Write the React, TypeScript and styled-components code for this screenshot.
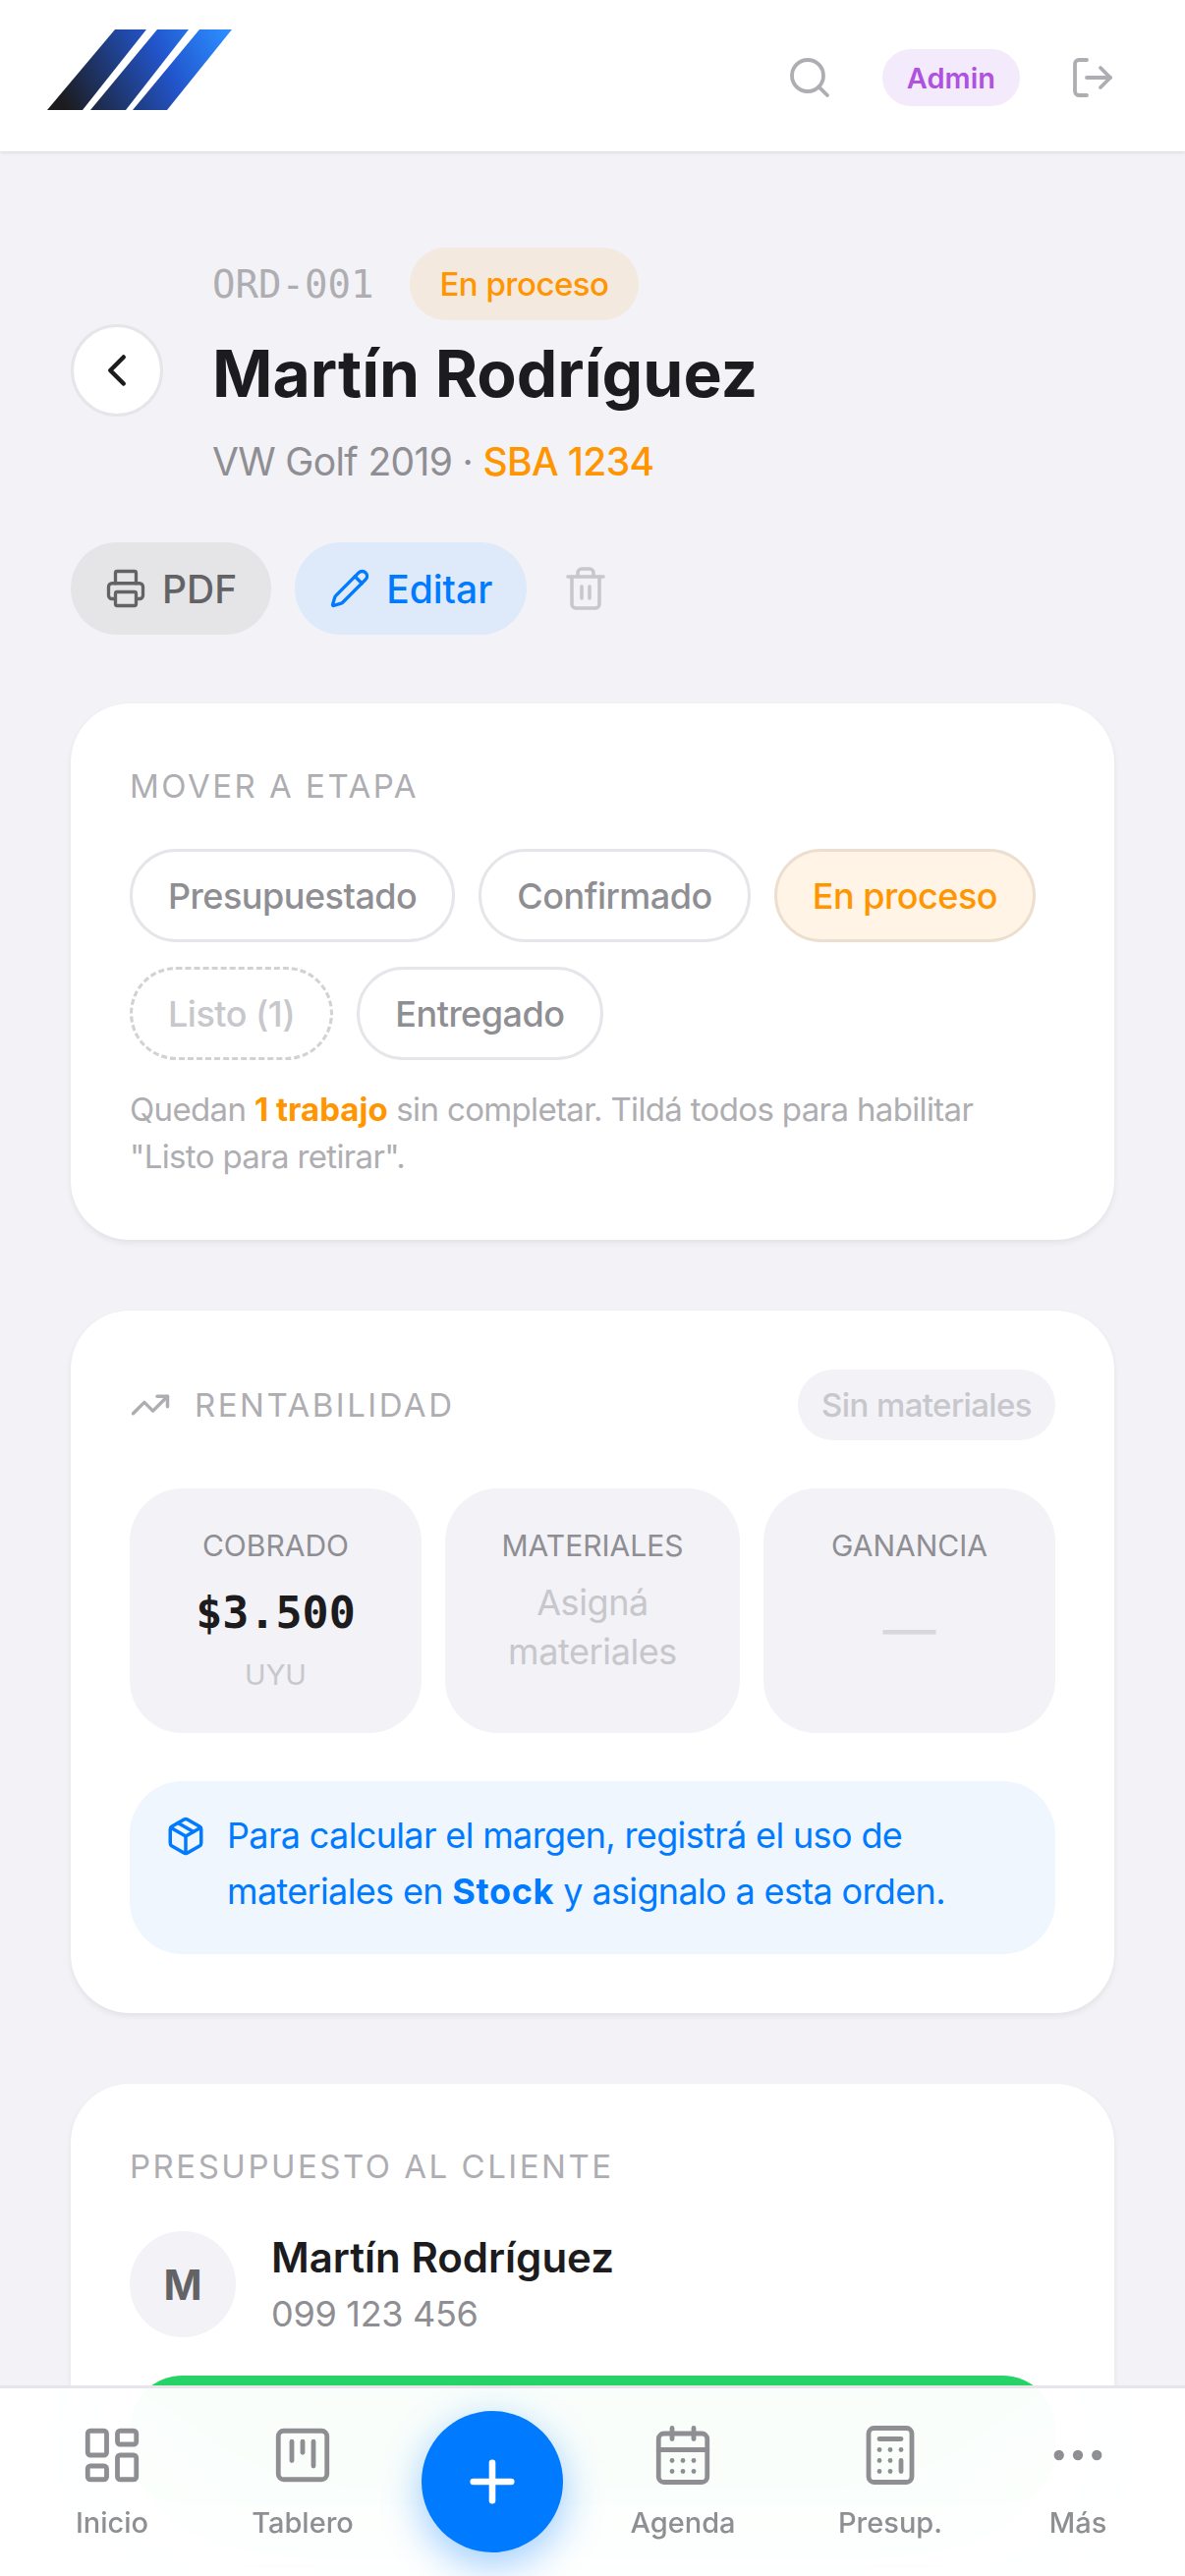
import React from 'react';
import styled, { createGlobalStyle } from 'styled-components';
import {
  Search, LogOut, ChevronLeft, Printer, Pencil, Trash2, TrendingUp, Package,
  LayoutDashboard, SquareKanban, Plus, CalendarDays, Calculator, Ellipsis,
} from 'lucide-react';

const Global = createGlobalStyle`
  html, body { margin: 0; padding: 0; background: #f2f2f7; }
  * { box-sizing: border-box; }
  body { font-family: Inter, "Liberation Sans", sans-serif; color: #1c1c1e; -webkit-font-smoothing: antialiased; }
`;

const Screen = styled.div`
  position: relative;
  width: 1206px;
  height: 2622px;
  overflow: hidden;
  background: #f2f2f7;
`;
const TopBar = styled.header`
  display: flex;
  align-items: center;
  justify-content: space-between;
  height: 154px;
  padding: 0 72px 0 48px;
  background: #fff;
  box-shadow: 0 2px 3px rgba(0, 0, 0, 0.08);
`;
const Logo = styled.svg`
  display: block;
  width: 188px;
  height: 82px;
  margin-top: -12px;
`;
const TopActions = styled.div`
  display: flex;
  align-items: center;
  gap: 50px;
  margin-top: 4px;
  margin-right: -2px;
  color: #aeaeb2;
`;
const Role = styled.span`
  display: flex;
  align-items: center;
  height: 58px;
  padding: 0 25px;
  border-radius: 29px;
  background: #f3eafb;
  color: #af52de;
  font-size: 29px;
  font-weight: 600;
`;
const Main = styled.main`
  padding: 98px 72px 0;
`;
const Head = styled.div`
  display: flex;
  align-items: center;
  gap: 50px;
`;
const Back = styled.button`
  flex: none;
  display: flex;
  align-items: center;
  justify-content: center;
  width: 94px;
  height: 94px;
  padding: 0;
  border: 3px solid #e5e5ea;
  border-radius: 50%;
  background: #fff;
  color: #1c1c1e;
`;
const HeadInfo = styled.div`
  display: flex;
  flex-direction: column;
`;
const IdRow = styled.div`
  display: flex;
  align-items: center;
  gap: 37px;
`;
const OrderId = styled.span`
  font-family: "DejaVu Sans Mono", "Liberation Mono", monospace;
  font-size: 39px;
  color: #aeaeb2;
`;
const StatusBadge = styled.span`
  display: flex;
  align-items: center;
  height: 74px;
  padding: 0 30px;
  border-radius: 37px;
  background: #f3e9df;
  color: #ff9500;
  font-size: 33px;
  letter-spacing: -0.5px;
  font-weight: 500;
`;
const Title = styled.h1`
  margin: 12px 0 0;
  font-size: 66px;
  line-height: 84px;
  font-weight: 700;
`;
const Sub = styled.div`
  margin-top: 16px;
  font-size: 39px;
  line-height: 64px;
  letter-spacing: -0.65px;
  color: #8e8e93;
`;
const Plate = styled.span`
  color: #ff9500;
  font-weight: 500;
`;
const Actions = styled.div`
  display: flex;
  align-items: center;
  gap: 24px;
  margin-top: 50px;
`;
const ActionButton = styled.button<{ $tone: 'gray' | 'blue' }>`
  display: flex;
  align-items: center;
  gap: 16px;
  height: 94px;
  padding: 0 35px;
  border: 0;
  border-radius: 47px;
  font-family: inherit;
  font-size: 39px;
  font-weight: 500;
  background: ${p => (p.$tone === 'blue' ? '#deeaf9' : '#e5e5e8')};
  color: ${p => (p.$tone === 'blue' ? '#007aff' : '#636366')};
`;
const TrashButton = styled.button`
  display: flex;
  margin-left: 12px;
  padding: 0;
  border: 0;
  background: none;
  color: #c7c7cc;
`;
const Card = styled.section`
  margin-top: 72px;
  padding: 60px;
  background: #fff;
  border-radius: 60px;
  box-shadow: 0 3px 6px rgba(0, 0, 0, 0.07);
  &:first-of-type {
    margin-top: 70px;
  }
`;
const Label = styled.div`
  font-size: 33px;
  line-height: 48px;
  letter-spacing: 2.5px;
  color: #aeaeb2;
`;
const Chips = styled.div`
  display: flex;
  flex-wrap: wrap;
  gap: 25px 24px;
  margin-top: 40px;
`;
const Chip = styled.span<{ $state?: 'active' | 'locked' }>`
  display: flex;
  align-items: center;
  height: 95px;
  padding: 0 36px;
  border-radius: 48px;
  font-size: 36px;
  letter-spacing: -0.5px;
  font-weight: 500;
  border: 3px ${p => (p.$state === 'locked' ? 'dashed #d1d1d6' : p.$state === 'active' ? 'solid #ecdfcf' : 'solid #e5e5ea')};
  background: ${p => (p.$state === 'active' ? '#fff4e6' : '#fff')};
  color: ${p => (p.$state === 'active' ? '#ff9500' : p.$state === 'locked' ? '#c7c7cc' : '#8e8e93')};
`;
const Hint = styled.p`
  margin: 26px 0 1px;
  font-size: 33px;
  line-height: 48px;
  letter-spacing: -0.65px;
  color: #aeaeb2;
`;
const HintStrong = styled.strong`
  color: #ff9500;
  font-weight: 700;
  letter-spacing: 0;
`;
const ProfitHead = styled.div`
  display: flex;
  align-items: center;
  justify-content: space-between;
`;
const ProfitTitle = styled.div`
  display: flex;
  align-items: center;
  gap: 24px;
  color: #aeaeb2;
`;
const MutedPill = styled.span`
  display: flex;
  align-items: center;
  height: 72px;
  padding: 0 24px;
  border-radius: 36px;
  background: #f2f2f7;
  color: #c7c7cc;
  font-size: 33px;
  letter-spacing: -0.6px;
  font-weight: 500;
`;
const Stats = styled.div`
  display: grid;
  grid-template-columns: 297px 300px 297px;
  gap: 24px;
  margin-top: 49px;
`;
const Stat = styled.div`
  display: flex;
  flex-direction: column;
  align-items: center;
  height: 249px;
  padding-top: 40px;
  border-radius: 54px;
  background: #f2f2f7;
  text-align: center;
`;
const StatLabel = styled.div`
  font-size: 30px;
  line-height: 36px;
  color: #8e8e93;
`;
const StatValue = styled.div`
  margin-top: 21px;
  font-family: "DejaVu Sans Mono", "Liberation Mono", monospace;
  font-size: 45px;
  line-height: 60px;
  font-weight: 700;
  color: #1c1c1e;
`;
const StatUnit = styled.div`
  margin-top: 15px;
  font-size: 29px;
  line-height: 36px;
  color: #c7c7cc;
`;
const StatEmpty = styled.div`
  margin-top: 15px;
  font-size: 36px;
  line-height: 50px;
  letter-spacing: -0.4px;
  color: #c7c7cc;
`;
const StatDash = styled.div`
  margin-top: 38px;
  font-size: 54px;
  line-height: 60px;
  color: #d8d8dc;
`;
const InfoBox = styled.div`
  display: flex;
  gap: 21px;
  height: 176px;
  margin-top: 49px;
  padding: 27px 36px;
  border-radius: 54px;
  background: #eff6fe;
  color: #007aff;
  font-size: 36px;
  line-height: 57px;
  letter-spacing: -0.65px;
`;
const InfoStrong = styled.strong`
  letter-spacing: 0.6px;
`;
const InfoIcon = styled.span`
  flex: none;
  margin-top: 8px;
  height: 42px;
`;
const ClientRow = styled.div`
  display: flex;
  align-items: center;
  gap: 36px;
  margin-top: 42px;
`;
const Avatar = styled.div`
  display: flex;
  align-items: center;
  justify-content: center;
  width: 108px;
  height: 108px;
  border-radius: 50%;
  background: #f2f2f7;
  color: #636366;
  font-size: 42px;
  font-weight: 700;
`;
const ClientName = styled.div`
  font-size: 42px;
  line-height: 54px;
  font-weight: 600;
`;
const ClientPhone = styled.div`
  margin-top: 6px;
  font-size: 36px;
  line-height: 48px;
  letter-spacing: -0.3px;
  color: #8e8e93;
`;
const WhatsAppBar = styled.div`
  height: 132px;
  margin-top: 39px;
  border-radius: 54px;
  background: #25d366;
`;
const BottomNav = styled.nav`
  position: absolute;
  left: 0;
  right: 0;
  bottom: 0;
  height: 194px;
  display: grid;
  grid-template-columns: 192px 196px 190px 198px 224px 158px;
  padding-left: 18px;
  border-top: 3px solid #e5e5ea;
  background: rgba(255, 255, 255, 0.97);
  backdrop-filter: blur(90px);
`;
const NavItem = styled.div`
  display: flex;
  flex-direction: column;
  align-items: center;
  padding-top: 35px;
  color: #8e8e93;
`;
const NavLabel = styled.span`
  margin-top: 18px;
  font-size: 29px;
  line-height: 36px;
  font-weight: 500;
`;
const NavCenter = styled.div`
  display: flex;
  justify-content: center;
  padding-top: 23px;
`;
const Fab = styled.button`
  display: flex;
  align-items: center;
  justify-content: center;
  width: 144px;
  height: 144px;
  padding: 0;
  border: 0;
  border-radius: 50%;
  background: #007aff;
  color: #fff;
  box-shadow: 0 12px 42px rgba(0, 122, 255, 0.4);
`;

const Brand = () => (
  <Logo viewBox="0 0 188 82" aria-label="Logo">
    <defs>
      <linearGradient id="brand" gradientUnits="userSpaceOnUse" x1="20" y1="82" x2="180" y2="0">
        <stop offset="0" stopColor="#1c1c1e" />
        <stop offset="0.62" stopColor="#2255cc" />
        <stop offset="1" stopColor="#2b8cff" />
      </linearGradient>
    </defs>
    <polygon points="0,82 36,82 101,0 69,0" fill="url(#brand)" />
    <polygon points="44,82 80,82 144,0 112,0" fill="url(#brand)" />
    <polygon points="87,82 122,82 188,0 155,0" fill="url(#brand)" />
  </Logo>
);

const navItems = [
  { label: 'Inicio', Icon: LayoutDashboard },
  { label: 'Tablero', Icon: SquareKanban },
  null,
  { label: 'Agenda', Icon: CalendarDays },
  { label: 'Presup.', Icon: Calculator },
  { label: 'Más', Icon: Ellipsis },
];

export default function App() {
  return (
    <Screen>
      <Global />
      <TopBar>
        <Brand />
        <TopActions>
          <Search size={48} strokeWidth={1.9} />
          <Role>Admin</Role>
          <LogOut size={48} strokeWidth={1.9} />
        </TopActions>
      </TopBar>
      <Main>
        <Head>
          <Back aria-label="Volver"><ChevronLeft size={54} strokeWidth={2} /></Back>
          <HeadInfo>
            <IdRow>
              <OrderId>ORD-001</OrderId>
              <StatusBadge>En proceso</StatusBadge>
            </IdRow>
            <Title>Martín Rodríguez</Title>
            <Sub>VW Golf 2019 · <Plate>SBA 1234</Plate></Sub>
          </HeadInfo>
        </Head>
        <Actions>
          <ActionButton $tone="gray"><Printer size={42} strokeWidth={1.9} />PDF</ActionButton>
          <ActionButton $tone="blue"><Pencil size={42} strokeWidth={1.9} />Editar</ActionButton>
          <TrashButton aria-label="Eliminar"><Trash2 size={48} strokeWidth={1.8} /></TrashButton>
        </Actions>

        <Card>
          <Label>MOVER A ETAPA</Label>
          <Chips>
            <Chip>Presupuestado</Chip>
            <Chip>Confirmado</Chip>
            <Chip $state="active">En proceso</Chip>
            <Chip $state="locked">Listo (1)</Chip>
            <Chip>Entregado</Chip>
          </Chips>
          <Hint>
            Quedan <HintStrong>1 trabajo</HintStrong> sin completar. Tildá todos para habilitar<br />
            "Listo para retirar".
          </Hint>
        </Card>

        <Card>
          <ProfitHead>
            <ProfitTitle>
              <TrendingUp size={42} strokeWidth={2} />
              <Label>RENTABILIDAD</Label>
            </ProfitTitle>
            <MutedPill>Sin materiales</MutedPill>
          </ProfitHead>
          <Stats>
            <Stat>
              <StatLabel>COBRADO</StatLabel>
              <StatValue>$3.500</StatValue>
              <StatUnit>UYU</StatUnit>
            </Stat>
            <Stat>
              <StatLabel>MATERIALES</StatLabel>
              <StatEmpty>Asigná<br />materiales</StatEmpty>
            </Stat>
            <Stat>
              <StatLabel>GANANCIA</StatLabel>
              <StatDash>—</StatDash>
            </Stat>
          </Stats>
          <InfoBox>
            <InfoIcon><Package size={42} strokeWidth={2} /></InfoIcon>
            <div>Para calcular el margen, registrá el uso de<br />materiales en <InfoStrong>Stock</InfoStrong> y asignalo a esta orden.</div>
          </InfoBox>
        </Card>

        <Card>
          <Label>PRESUPUESTO AL CLIENTE</Label>
          <ClientRow>
            <Avatar>M</Avatar>
            <div>
              <ClientName>Martín Rodríguez</ClientName>
              <ClientPhone>099 123 456</ClientPhone>
            </div>
          </ClientRow>
          <WhatsAppBar />
        </Card>
      </Main>
      <BottomNav>
        {navItems.map((item, i) =>
          item ? (
            <NavItem key={item.label}>
              <item.Icon size={66} strokeWidth={1.75} />
              <NavLabel>{item.label}</NavLabel>
            </NavItem>
          ) : (
            <NavCenter key={i}>
              <Fab aria-label="Nuevo"><Plus size={66} strokeWidth={2.4} /></Fab>
            </NavCenter>
          ),
        )}
      </BottomNav>
    </Screen>
  );
}
